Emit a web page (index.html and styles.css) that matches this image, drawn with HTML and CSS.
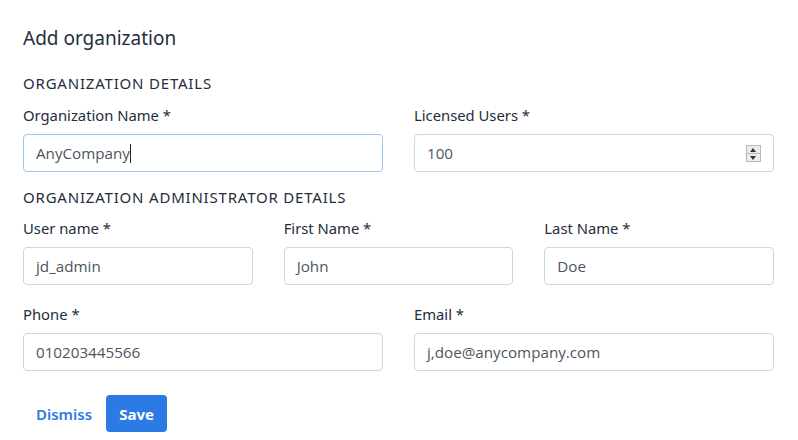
FILE: index.html
```html
<!DOCTYPE html>
<html lang="en">
<head>
<meta charset="utf-8">
<title>Add organization</title>
<link rel="stylesheet" href="styles.css">
</head>
<body>
<div class="page">
  <h1 class="title">Add organization</h1>
  <h2 class="section">ORGANIZATION DETAILS</h2>
  <div class="row two">
    <div class="field">
      <label class="label">Organization Name *</label>
      <div class="input focus">AnyCompany<span class="caret"></span></div>
    </div>
    <div class="field">
      <label class="label">Licensed Users *</label>
      <div class="input number">100
        <span class="spinner"><span class="up"></span><span class="down"></span></span>
      </div>
    </div>
  </div>
  <h2 class="section sec2">ORGANIZATION ADMINISTRATOR DETAILS</h2>
  <div class="row three">
    <div class="field">
      <label class="label">User name *</label>
      <div class="input">jd_admin</div>
    </div>
    <div class="field">
      <label class="label">First Name *</label>
      <div class="input">John</div>
    </div>
    <div class="field">
      <label class="label">Last Name *</label>
      <div class="input">Doe</div>
    </div>
  </div>
  <div class="row two row-gap">
    <div class="field">
      <label class="label">Phone *</label>
      <div class="input">010203445566</div>
    </div>
    <div class="field">
      <label class="label">Email *</label>
      <div class="input">j,doe@anycompany.com</div>
    </div>
  </div>
  <div class="actions">
    <a class="link">Dismiss</a>
    <button class="btn">Save</button>
  </div>
</div>
</body>
</html>
```
FILE: styles.css
```css
* { box-sizing: border-box; }
body {
  margin: 0;
  background: #fff;
  font-family: "Noto Sans", "Open Sans", sans-serif;
  color: #232e3c;
}
.page {
  padding: 24px 24px 0 23px;
}
.title {
  margin: 0;
  font-size: 19px;
  font-weight: 400;
  line-height: 28px;
}
.section {
  margin: 20px 0 10px;
  font-size: 15px;
  font-weight: 400;
  line-height: 22px;
  letter-spacing: 0.8px;
}
.section.sec2 { margin-top: 14px; margin-bottom: 9px; }
.row {
  display: grid;
  column-gap: 31px;
}
.row.two { grid-template-columns: 1fr 1fr; }
.row.three { grid-template-columns: 1fr 1fr 1fr; }
.row-gap { margin-top: 18px; }
.field {
  display: flex;
  flex-direction: column;
  gap: 8px;
}
.label {
  font-size: 14.8px;
  line-height: 22px;
}
.input {
  position: relative;
  height: 38px;
  border: 1px solid #d1d6dd;
  border-radius: 4px;
  padding: 0 12px;
  display: flex;
  align-items: center;
  font-family: "Open Sans", "Noto Sans", sans-serif;
  font-size: 15.2px;
  color: #4d5560;
}
.input.focus { border-color: #9ec3f2; }
.caret {
  display: inline-block;
  width: 1px;
  height: 19px;
  background: #222;
  margin-left: 0;
}
.spinner {
  position: absolute;
  right: 12px;
  top: 10px;
  width: 15px;
  height: 17px;
  border: 1px solid #b9b9b9;
  background: #ececec;
  display: flex;
  flex-direction: column;
}
.spinner .up, .spinner .down {
  flex: 1;
  position: relative;
}
.spinner .up { border-bottom: 1px solid #b9b9b9; }
.spinner .up::after, .spinner .down::after {
  content: "";
  position: absolute;
  left: 3px;
  border-left: 3.5px solid transparent;
  border-right: 3.5px solid transparent;
}
.spinner .up::after { top: 2px; border-bottom: 4px solid #333; }
.spinner .down::after { top: 2px; border-top: 4px solid #333; }
.actions {
  margin-top: 24px;
  display: flex;
  align-items: center;
  gap: 14px;
  padding-left: 13px;
}
.link {
  color: #2c7be5;
  font-size: 15px;
  font-weight: 600;
  cursor: pointer;
}
.btn {
  height: 37px;
  width: 61px;
  border: none;
  border-radius: 4px;
  background: #2c7be5;
  color: #fff;
  font-family: "Noto Sans", "Open Sans", sans-serif;
  font-size: 15px;
  font-weight: 700;
}
```
